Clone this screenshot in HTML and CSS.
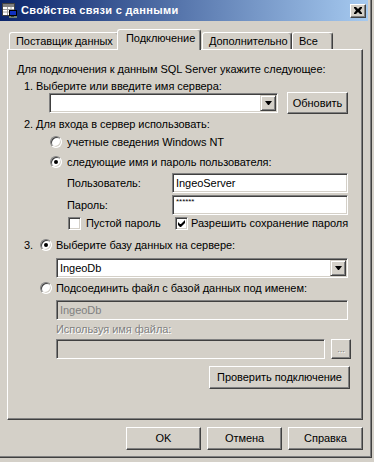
FILE: index.html
```html
<!DOCTYPE html>
<html>
<head>
    <meta charset="utf-8">
    <title>Свойства связи с данными</title>
    <link rel="stylesheet" href="styles.css">
</head>
<body>
    <div class="window">
        <div class="client">
            <div class="titlebar">
                <svg class="app-icon" width="16" height="16" viewBox="0 0 16 16">
                    <rect x="0.5" y="0.5" width="12" height="12" fill="#fff" stroke="#404040"/>
                    <rect x="1" y="1" width="11" height="3" fill="#808080"/>
                    <path d="M1 6.5h11M1 9h11M5.5 4v8M9 4v8" stroke="#a0a0a0" stroke-width="1"/>
                    <rect x="7.5" y="7.5" width="7" height="5" fill="#1030c0" stroke="#000"/>
                    <rect x="7" y="13" width="8" height="2" fill="#708070"/>
                    <rect x="9" y="12.5" width="3" height="1" fill="#000"/>
                </svg>
                <span class="caption">Свойства связи с данными</span>
                <span class="close">
                    <svg width="8" height="7" viewBox="0 0 8 7">
                        <path d="M0 0h2l2 2 2-2h2v1l-2 2.5 2 2.5v1h-2l-2-2-2 2h-2v-1l2-2.5-2-2.5z" fill="#000"/>
                    </svg>
                </span>
            </div>

            <div class="tabs">
                <div class="tab t1">Поставщик данных</div>
                <div class="tab t2 active">Подключение</div>
                <div class="tab t3">Дополнительно</div>
                <div class="tab t4">Все</div>
            </div>

            <div class="panel">
                <div class="row intro">Для подключения к данным SQL Server укажите следующее:</div>
                <div class="row step1">1. Выберите или введите имя сервера:</div>
                <div class="row server">
                    <div class="field combo server-combo">
                        <span class="value"></span>
                        <span class="drop"><i class="arrow"></i></span>
                    </div>
                    <div class="btn refresh">Обновить</div>
                </div>
                <div class="row step2">2. Для входа в сервер использовать:</div>
                <div class="row opt opt-nt">
                    <span class="radio"></span>
                    <span>учетные сведения Windows NT</span>
                </div>
                <div class="row opt opt-user">
                    <span class="radio checked"></span>
                    <span>следующие имя и пароль пользователя:</span>
                </div>
                <div class="row cred cred-user">
                    <label class="cred-label">Пользователь:</label>
                    <div class="field text">IngeoServer</div>
                </div>
                <div class="row cred cred-pass">
                    <label class="cred-label">Пароль:</label>
                    <div class="field text pass">******</div>
                </div>
                <div class="row checks">
                    <span class="check-group first">
                        <span class="checkbox"></span>
                        <span>Пустой пароль</span>
                    </span>
                    <span class="check-group second">
                        <span class="checkbox">
                            <svg width="9" height="9" viewBox="0 0 9 9"><path d="M1 3v3l2 2h1l4-4v-3l-4 4h-1z" fill="#000"/></svg>
                        </span>
                        <span>Разрешить сохранение пароля</span>
                    </span>
                </div>
                <div class="row step3">
                    <span class="num">3.</span>
                    <span class="radio checked"></span>
                    <span>Выберите базу данных на сервере:</span>
                </div>
                <div class="row db">
                    <div class="field combo db-combo">
                        <span class="value">IngeoDb</span>
                        <span class="drop"><i class="arrow"></i></span>
                    </div>
                </div>
                <div class="row attach">
                    <span class="radio"></span>
                    <span>Подсоединить файл с базой данных под именем:</span>
                </div>
                <div class="row attach-name">
                    <div class="field text disabled wide">IngeoDb</div>
                </div>
                <div class="row file-label disabled-text">Используя имя файла:</div>
                <div class="row file">
                    <div class="field text disabled file-path"></div>
                    <div class="btn browse disabled-text">...</div>
                </div>
                <div class="row test">
                    <div class="btn test-btn">Проверить подключение</div>
                </div>
            </div>

            <div class="footer">
                <div class="btn dlg">OK</div>
                <div class="btn dlg">Отмена</div>
                <div class="btn dlg">Справка</div>
            </div>
        </div>
    </div>
</body>
</html>
```

FILE: styles.css
```css
html, body{
    margin: 0;
    padding: 0;
}
body{
    width: 374px;
    height: 462px;
    background-color: #d4d0c8;
    font-family: "Liberation Sans", Arial, sans-serif;
    font-size: 11px;
    line-height: 13px;
    letter-spacing: -0.05px;
    color: #000;
    overflow: hidden;
}
.window{
    width: 372px;
    height: 458px;
    background-color: #d4d0c8;
    box-shadow: inset -1px -1px #404040, inset -2px -2px #808080;
}
.client{
    width: 368px;
    height: 454px;
    display: flex;
    flex-direction: column;
}

/* title bar */
.titlebar{
    height: 21px;
    display: flex;
    align-items: center;
    background-image: linear-gradient(to right, #0a246a, #a6caf0);
}
.app-icon{
    margin-left: 2px;
    margin-right: 3px;
    flex: none;
}
.caption{
    flex: 1;
    color: #fff;
    font-weight: bold;
    font-size: 11px;
    letter-spacing: 0.03em;
}
.close{
    width: 16px;
    height: 14px;
    box-sizing: border-box;
    margin-right: 2px;
    background-color: #d4d0c8;
    border: 1px solid;
    border-color: #fff #404040 #404040 #fff;
    box-shadow: inset -1px -1px #808080;
    display: flex;
    align-items: center;
    justify-content: center;
}

/* tabs */
.tabs{
    display: flex;
    align-items: flex-end;
    margin-top: 8px;
    padding-left: 9px;
}
.tab{
    height: 17px;
    box-sizing: border-box;
    padding-left: 6px;
    padding-top: 2px;
    border: 1px solid #fff;
    border-bottom: none;
    border-right-color: #404040;
    border-radius: 3px 3px 0 0;
    box-shadow: inset -1px 0 #808080;
    white-space: nowrap;
    overflow: hidden;
}
.tab.t1{ width: 110px; }
.tab.t2{ width: 84px; margin-left: -2px; margin-right: 1px; }
.tab.t3{ width: 90px; }
.tab.t4{ width: 41px; }
.tab.active{
    height: 21px;
    margin-bottom: -1px;
    padding-left: 8px;
    background-color: #d4d0c8;
    z-index: 1;
}

/* panel */
.panel{
    margin-left: 7px;
    width: 356px;
    height: 371px;
    box-sizing: border-box;
    border-top: 1px solid #fff;
    border-left: 1px solid #fff;
    border-right: 1px solid #404040;
    border-bottom: 1px solid #404040;
    box-shadow: inset -1px -1px #808080;
    display: flex;
    flex-direction: column;
}
.row{
    display: flex;
    align-items: center;
    white-space: nowrap;
}
.intro{ margin-top: 13px; height: 13px; padding-left: 9px; }
.step1{ margin-top: 4px; height: 12px; padding-left: 16px; }
.server{ height: 22px; }
.step2{ margin-top: 4px; height: 13px; padding-left: 16px; }
.opt{ height: 14px; padding-left: 42px; gap: 5px; }
.opt-nt{ margin-top: 4px; }
.opt-user{ margin-top: 6px; }
.cred{ height: 20px; padding-left: 59px; }
.cred-user{ margin-top: 4px; }
.cred-pass{ margin-top: 2px; }
.cred-label{ width: 105px; }
.checks{ margin-top: 1px; height: 14px; padding-left: 60px; }
.check-group{ display: flex; align-items: center; }
.check-group.first{ width: 107px; gap: 5px; }
.check-group.second{ gap: 3px; }
.step3{ margin-top: 8px; height: 14px; padding-left: 16px; }
.step3 .num{ width: 16px; }
.step3 .radio{ margin-right: 4px; }
.db{ margin-top: 6px; height: 20px; padding-left: 48px; }
.attach{ margin-top: 3px; height: 14px; padding-left: 32px; gap: 4px; }
.attach-name{ margin-top: 5px; height: 20px; padding-left: 48px; }
.file-label{ margin-top: 3px; height: 13px; padding-left: 48px; }
.file{ margin-top: 3px; height: 20px; padding-left: 48px; gap: 6px; }
.test{ margin-top: 7px; height: 23px; padding-left: 201px; }

/* controls */
.field{
    box-sizing: border-box;
    height: 20px;
    background-color: #fff;
    border: 1px solid;
    border-color: #808080 #fff #fff #808080;
    box-shadow: inset 1px 1px #404040, inset -1px -1px #d4d0c8;
}
.text{
    padding: 0 3px;
    display: flex;
    align-items: center;
}
.cred .text{ width: 176px; }
.pass{
    align-items: flex-start;
    padding-top: 1px;
    font-size: 8px;
    line-height: 10px;
}
.combo{
    display: flex;
    align-items: stretch;
    padding: 1px;
}
.combo .value{
    flex: 1;
    padding-left: 2px;
    display: flex;
    align-items: center;
}
.server-combo{ margin-left: 41px; width: 229px; }
.db-combo{ width: 292px; }
.drop{
    width: 16px;
    box-sizing: border-box;
    background-color: #d4d0c8;
    border: 1px solid;
    border-color: #d4d0c8 #404040 #404040 #d4d0c8;
    box-shadow: inset 1px 1px #fff, inset -1px -1px #808080;
    display: flex;
    align-items: center;
    justify-content: center;
}
.arrow{
    width: 1px;
    height: 0;
    border-left: 3px solid transparent;
    border-right: 3px solid transparent;
    border-top: 4px solid #000;
}
.btn{
    box-sizing: border-box;
    background-color: #d4d0c8;
    border: 1px solid;
    border-color: #fff #404040 #404040 #fff;
    box-shadow: inset -1px -1px #808080;
    display: flex;
    align-items: center;
    justify-content: center;
}
.refresh{ margin-left: 9px; width: 61px; height: 22px; }
.browse{ width: 20px; height: 20px; font-size: 9px; }
.test-btn{ width: 141px; height: 23px; }
.disabled{
    background-color: #d4d0c8;
    color: #808080;
}
.wide{ width: 292px; }
.file-path{ width: 269px; }
.disabled-text{
    color: #808080;
    text-shadow: 1px 1px #fff;
}

.radio{
    width: 12px;
    height: 12px;
    box-sizing: border-box;
    border-radius: 50%;
    background-color: #fff;
    border: 1px solid;
    border-color: #808080 #fff #fff #808080;
    box-shadow: inset 1px 1px #404040, inset -1px -1px #d4d0c8;
    display: flex;
    align-items: center;
    justify-content: center;
    flex: none;
}
.radio.checked::after{
    content: '';
    width: 4px;
    height: 4px;
    border-radius: 50%;
    background-color: #000;
}
.checkbox{
    width: 13px;
    height: 13px;
    box-sizing: border-box;
    background-color: #fff;
    border: 1px solid;
    border-color: #808080 #fff #fff #808080;
    box-shadow: inset 1px 1px #404040, inset -1px -1px #d4d0c8;
    display: flex;
    align-items: center;
    justify-content: center;
    flex: none;
}

/* footer */
.footer{
    margin-top: 7px;
    display: flex;
    justify-content: flex-end;
    gap: 6px;
    padding-right: 5px;
}
.dlg{
    width: 75px;
    height: 23px;
}
```
